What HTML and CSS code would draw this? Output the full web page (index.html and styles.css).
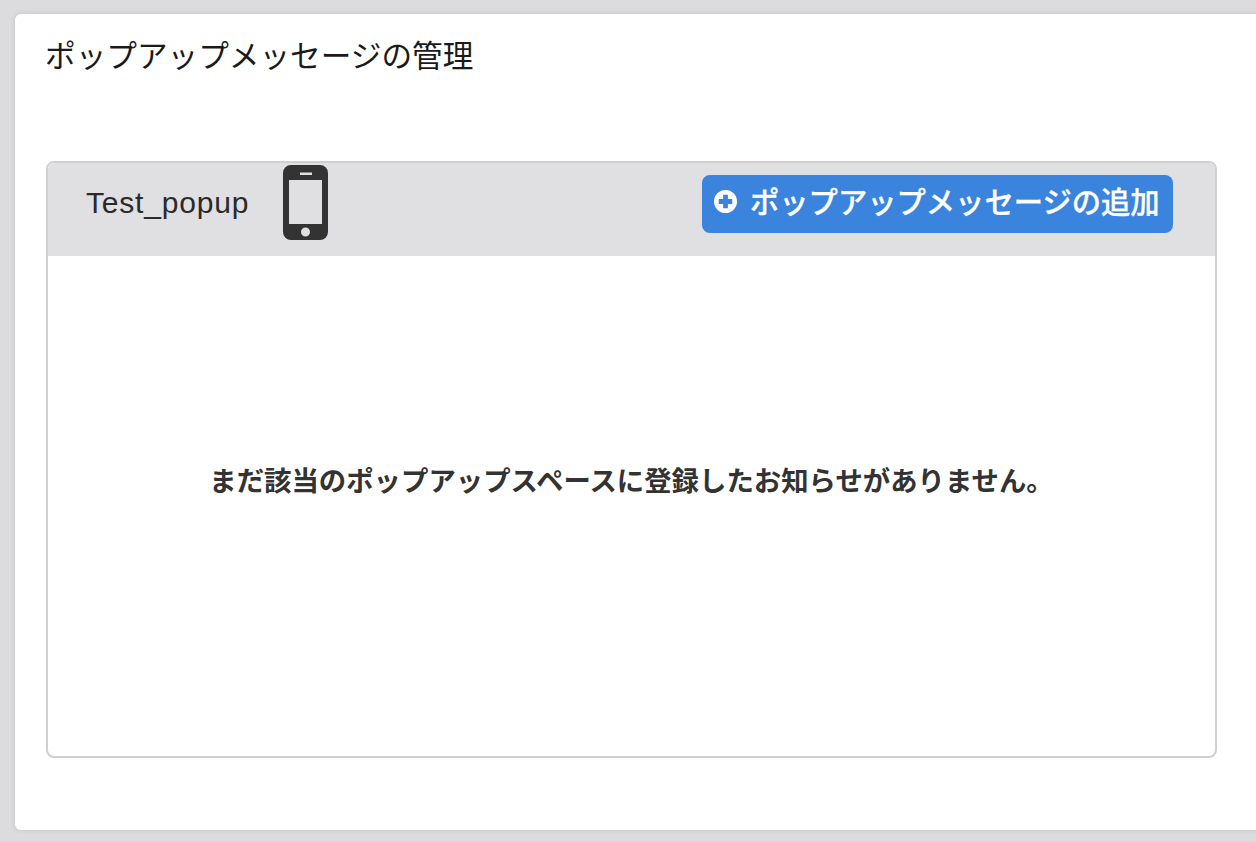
FILE: index.html
```html
<!DOCTYPE html>
<html>
    <head>
        <meta charset="UTF-8" />
        <meta name="viewport" content="width=device-width, initial-scale=1.0" />
        <title>ポップアップメッセージの管理</title>
        <link rel="stylesheet" href="styles.css">
    </head>
    <body>
        <div class="card">
            <h2 class="cardTitle">ポップアップメッセージの管理</h2>
            <div class="panel">
                <div class="panelHead">
                    <span class="spaceName">Test_popup</span>
                    <svg class="phoneIcon" viewBox="0 0 45 75" aria-hidden="true">
                        <path fill="#333" fill-rule="evenodd" d="M8 0H37A8 8 0 0 1 45 8V67A8 8 0 0 1 37 75H8A8 8 0 0 1 0 67V8A8 8 0 0 1 8 0ZM6 15V59H39V15ZM17 7.500V10H29V7.500ZM22.500 62.500A4.500 4.500 0 1 0 22.500 71.500A4.500 4.500 0 1 0 22.500 62.500Z" />
                    </svg>
                    <button class="addBtn">
                        <svg class="plusIcon" viewBox="0 0 24 24" aria-hidden="true">
                            <path fill="#fff" fill-rule="evenodd" d="M12 0A12 12 0 1 1 12 24A12 12 0 1 1 12 0ZM9.500 5V9.500H5V14.500H9.500V19H14.500V14.500H19V9.500H14.500V5Z" />
                        </svg>
                        ポップアップメッセージの追加
                    </button>
                </div>
                <div class="panelBody">
                    <p class="emptyMsg">まだ該当のポップアップスペースに登録したお知らせがありません。</p>
                </div>
            </div>
        </div>
    </body>
</html>
```
FILE: styles.css
```css
*,
*::before,
*::after {
    box-sizing: border-box;
}

html,
body {
    margin: 0;
    padding: 0;
    height: 100%;
    overflow: hidden;
    background: #dcdcde;
    font-family: "Liberation Sans", "Noto Sans CJK JP", sans-serif;
    color: #222;
}

body {
    padding: 14px 0 12px 15px;
}

/* card runs off the right edge */
.card {
    height: 816px;
    margin-right: -20px;
    padding: 22px 0 0 30px;
    background: #fff;
    border-radius: 6px;
    box-shadow: 0 0 5px rgba(0, 0, 0, 0.12);
}

.cardTitle {
    margin: 0;
    font-size: 30.650px;
    font-weight: normal;
    line-height: 40px;
    color: #1a1a1a;
}

.panel {
    width: 1171px;
    height: 597px;
    margin: 85px 0 0 1px;
    display: flex;
    flex-direction: column;
    border: 2px solid #d0d0d2;
    border-radius: 8px;
    overflow: hidden;
}

.panelHead {
    height: 93px;
    flex-shrink: 0;
    display: flex;
    align-items: center;
    padding: 0 42px 15px 38px;
    background: #e0e0e2;
}

.spaceName {
    margin-top: 2px;
    font-size: 30px;
    letter-spacing: 0.800px;
    color: #2a2a2a;
}

.phoneIcon {
    width: 45px;
    height: 75px;
    margin-left: 34px;
    flex-shrink: 0;
}

.addBtn {
    margin-left: auto;
    margin-top: 4px;
    width: 471px;
    height: 58px;
    display: flex;
    align-items: center;
    padding: 0 0 9px 12px;
    border: none;
    border-radius: 8px;
    background: #3b84dd;
    color: #fff;
    font-family: inherit;
    font-size: 29.300px;
    font-weight: 500;
    white-space: nowrap;
    -webkit-text-stroke: 0.300px #fff;
}

.plusIcon {
    width: 23px;
    height: 23px;
    margin: 3px 13px 0 0;
    flex-shrink: 0;
}

.panelBody {
    flex: 1;
    display: flex;
    justify-content: center;
    align-items: center;
    padding-bottom: 54px;
}

.emptyMsg {
    margin: 0;
    font-size: 27.400px;
    font-weight: bold;
    color: #333;
    white-space: nowrap;
}
```
